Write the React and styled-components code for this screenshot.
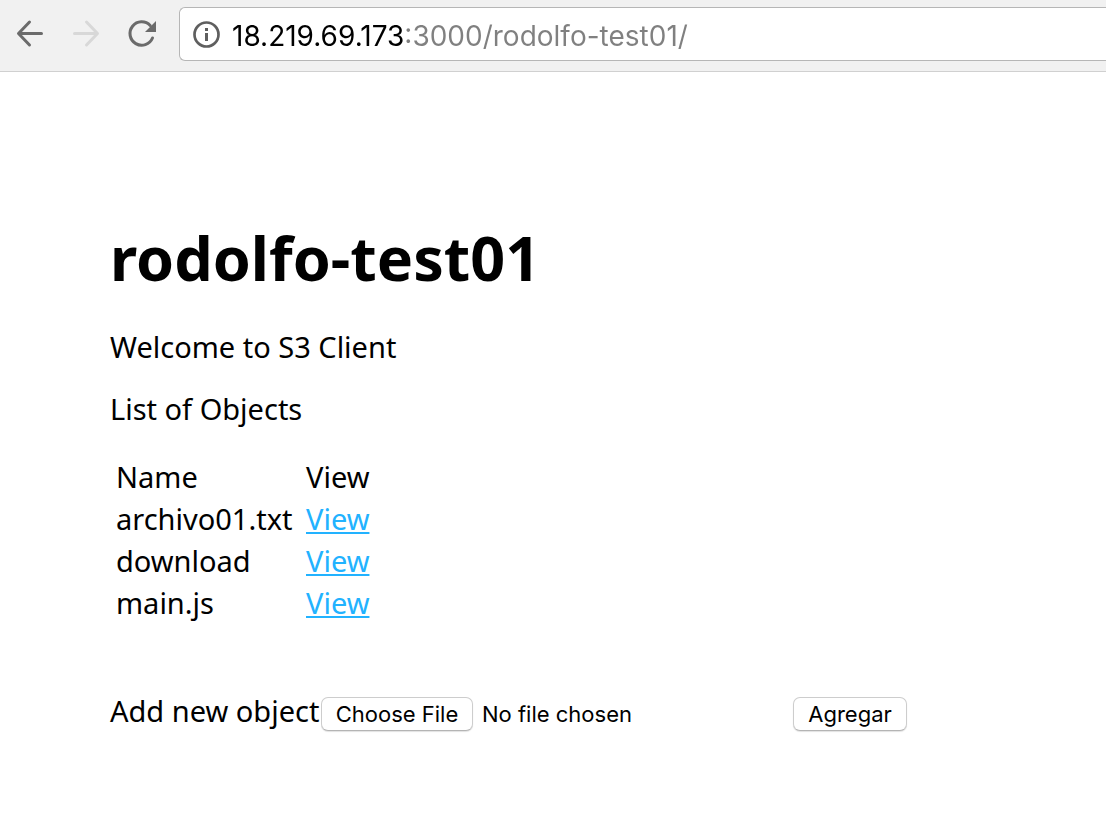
import React from "react";
import styled, { createGlobalStyle } from "styled-components";

const GlobalStyle = createGlobalStyle`
  *, *::before, *::after { box-sizing: border-box; }
  body {
    margin: 0;
    background: #fff;
    color: #000;
    font: 29px/34px "Lucida Grande", "Noto Sans", sans-serif;
  }
`;

const Toolbar = styled.header`
  display: flex;
  align-items: center;
  height: 72px;
  padding-bottom: 3px;
  padding-left: 10px;
  background: #f1f1f1;
  border-bottom: 1px solid #d0d0d0;
`;

const NavButton = styled.button`
  display: flex;
  flex: none;
  width: 40px;
  height: 40px;
  margin-right: 16px;
  padding: 0;
  border: 0;
  background: none;
  color: ${(p) => (p.disabled ? "#d8d8d8" : "#6b6b6b")};
`;

const AddressBar = styled.label`
  display: flex;
  flex: 1;
  align-items: center;
  gap: 12px;
  min-width: 0;
  height: 54px;
  margin-left: 1px;
  padding-left: 12px;
  background: #fff;
  border: 1px solid #b6b6b6;
  border-right: 0;
  border-radius: 6px 0 0 6px;
  color: #5f5f5f;
`;

const AddressInput = styled.input`
  flex: 1;
  min-width: 0;
  height: 44px;
  padding: 4px 0 0;
  border: 0;
  outline: 0;
  background: linear-gradient(to right, #000 173px, #808080 173px);
  -webkit-background-clip: text;
  background-clip: text;
  -webkit-text-fill-color: transparent;
  font: 28px/40px Inter, sans-serif;
`;

const Page = styled.main`
  padding: 152px 110px 100px;
`;

const Title = styled.h1`
  margin: 0 0 38px;
  font-size: 61px;
  line-height: 68px;
  font-weight: 700;
`;

const Paragraph = styled.p`
  margin: 0 0 28px;
`;

const ObjectTable = styled.table`
  border-spacing: 4px;
`;

const Cell = styled.td`
  padding: 2px;
  text-align: left;
  font-weight: 400;
`;

const HeadCell = styled(Cell).attrs({ as: "th", scope: "col" })`
  min-width: ${(p) => p.$width || 0}px;
`;

const ViewLink = styled.a`
  color: #22b2ff;
  text-decoration: underline;
  text-decoration-thickness: 2px;
  text-underline-offset: 2px;
  text-decoration-skip-ink: none;
`;

const UploadForm = styled.form`
  display: flex;
  align-items: baseline;
  margin-top: 68px;
`;

const UploadLabel = styled.label`
  flex: none;
  min-width: 211px;
`;

const FileInput = styled.input`
  flex: none;
  width: 472px;
  height: 36px;
  color: #000;
  font: 22px/32px Inter, sans-serif;

  &::file-selector-button {
    width: 152px;
    height: 34px;
    margin: 0 9px 2px 0;
    padding: 0;
    border: 1px solid #cdcdcd;
    border-bottom-color: #b4b4b4;
    border-radius: 7px;
    background: #fff;
    box-shadow: 0 1px 1px #e2e2e2;
    color: #000;
    font: 22px/32px Inter, sans-serif;
  }
`;

const SubmitButton = styled.button`
  width: 114px;
  height: 34px;
  padding: 0;
  border: 1px solid #cdcdcd;
  border-bottom-color: #b4b4b4;
  border-radius: 7px;
  background: #fff;
  box-shadow: 0 1px 1px #e2e2e2;
  color: #000;
  font: 22px/32px Inter, sans-serif;
`;

const strokeProps = {
  fill: "none",
  stroke: "currentColor",
  strokeWidth: 3,
  strokeLinecap: "round",
};

function BackIcon() {
  return (
    <svg width="40" height="40" viewBox="0 0 40 40" aria-hidden="true">
      <path d="M31.500 19.500H9M19.500 8L8.500 19.500L19.500 31" {...strokeProps} strokeLinejoin="round" />
    </svg>
  );
}

function ForwardIcon() {
  return (
    <svg width="40" height="40" viewBox="0 0 40 40" aria-hidden="true">
      <path d="M8.500 19.500H31M20.500 8L31.500 19.500L20.500 31" {...strokeProps} strokeLinejoin="round" />
    </svg>
  );
}

function ReloadIcon() {
  return (
    <svg width="40" height="40" viewBox="0 0 40 40" aria-hidden="true">
      <path d="M30.500 24A11.700 11.700 0 1 1 28.200 11.500" {...strokeProps} />
      <path d="M34 7V18H23Z" fill="currentColor" />
    </svg>
  );
}

function InfoIcon() {
  return (
    <svg width="28" height="28" viewBox="0 0 28 28" aria-hidden="true">
      <circle cx="14.500" cy="14.500" r="12" fill="none" stroke="currentColor" strokeWidth="2.700" />
      <path d="M13 8h3v3h-3zM13 13h3v8h-3z" fill="currentColor" />
    </svg>
  );
}

const objects = ["archivo01.txt", "download", "main.js"];

export default function App() {
  return (
    <>
      <GlobalStyle />
      <Toolbar>
        <NavButton type="button" aria-label="Back"><BackIcon /></NavButton>
        <NavButton type="button" aria-label="Forward" disabled><ForwardIcon /></NavButton>
        <NavButton type="button" aria-label="Reload"><ReloadIcon /></NavButton>
        <AddressBar>
          <InfoIcon />
          <AddressInput
            type="text"
            aria-label="Address"
            defaultValue="18.219.69.173:3000/rodolfo-test01/"
            spellCheck={false}
          />
        </AddressBar>
      </Toolbar>
      <Page>
        <Title>rodolfo-test01</Title>
        <Paragraph>Welcome to S3 Client</Paragraph>
        <Paragraph>List of Objects</Paragraph>
        <ObjectTable>
          <thead>
            <tr>
              <HeadCell $width={186}>Name</HeadCell>
              <HeadCell>View</HeadCell>
            </tr>
          </thead>
          <tbody>
            {objects.map((name) => (
              <tr key={name}>
                <Cell>{name}</Cell>
                <Cell><ViewLink href={`#${name}`}>View</ViewLink></Cell>
              </tr>
            ))}
          </tbody>
        </ObjectTable>
        <UploadForm onSubmit={(event) => event.preventDefault()}>
          <UploadLabel htmlFor="object-file">Add new object</UploadLabel>
          <FileInput id="object-file" type="file" />
          <SubmitButton type="submit">Agregar</SubmitButton>
        </UploadForm>
      </Page>
    </>
  );
}
